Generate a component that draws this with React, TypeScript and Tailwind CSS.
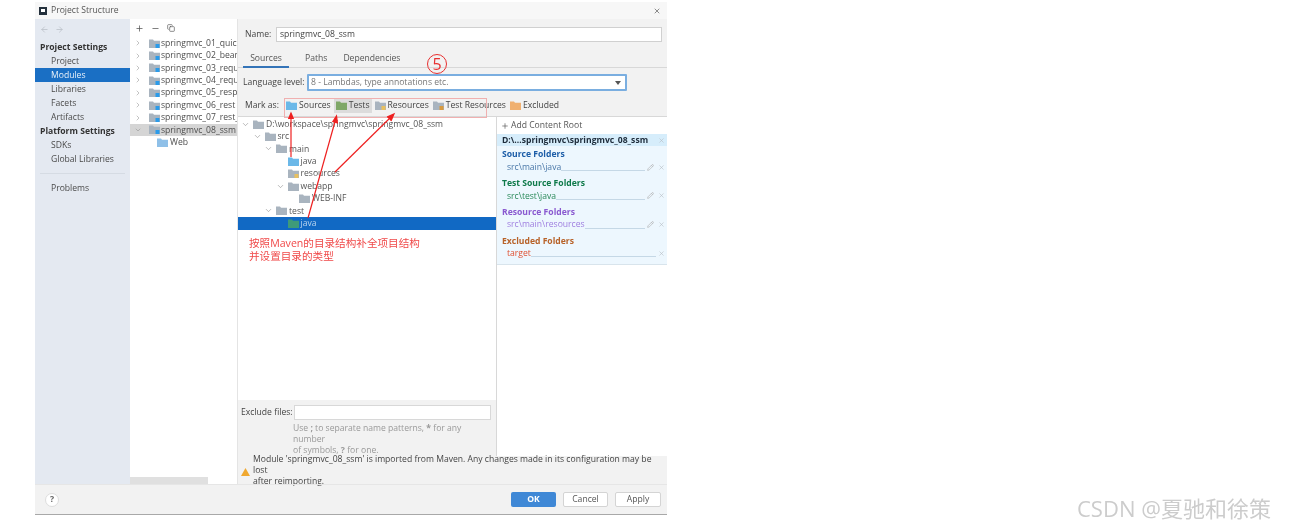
import { ChevronDown, ChevronRight, Plus, Minus, Copy, ArrowLeft, ArrowRight, X, Pencil } from "lucide-react";

const modules = [
  "springmvc_01_quickstart",
  "springmvc_02_bean_load",
  "springmvc_03_request_mapping",
  "springmvc_04_request_param",
  "springmvc_05_response",
  "springmvc_06_rest",
  "springmvc_07_rest_case",
];

const Folder = ({ color = "#a9b4bf", badge }: { color?: string; badge?: string }) => (
  <svg width="11" height="9" viewBox="0 0 11 9" className="shrink-0">
    <path d="M0 0.5h4l1 1.2h6V9H0z" fill={color} />
    {badge && <rect x="6.5" y="5" width="4" height="4" fill={badge} />}
  </svg>
);

const NavItem = ({ label, active }: { label: string; active?: boolean }) => (
  <div className={`h-[14px] pl-[16px] flex items-center ${active ? "bg-[#1a6fc4] text-[#e8f0f8]" : "text-[#4a4a4a]"}`}>{label}</div>
);

const TreeRow = ({ depth, label, open, color, badge, active }: { depth: number; label: string; open?: boolean; color?: string; badge?: string; active?: boolean }) => (
  <div className={`h-[12.4px] flex items-center ${active ? "bg-[#1169c4] text-[#b8d4ee]" : "text-[#555]"}`} style={{ paddingLeft: depth * 11.5 + 3 }}>
    <span className="w-[12px] shrink-0">{open && <ChevronDown size={9} strokeWidth={1.5} className="text-[#888]" />}</span>
    <Folder color={color} badge={badge} />
    <span className="ml-[2px] whitespace-nowrap">{label}</span>
  </div>
);

const FolderGroup = ({ title, path, titleColor, pathColor, edit = true }: { title: string; path: string; titleColor: string; pathColor: string; edit?: boolean }) => (
  <div className="h-[28.8px] pl-[5px] pr-[2px]">
    <div className={`h-[13px] flex items-center font-bold ${titleColor}`}>{title}</div>
    <div className="h-[12px] flex items-center">
      <span className={`pl-[5px] ${pathColor}`}>{path}</span>
      <span className="flex-1 self-end mb-[2px] mr-[2px] border-b border-[#c5d8e6]" />
      {edit && <Pencil size={7} className="text-[#aaa] mr-[4px]" />}
      <X size={7} className="text-[#b5bcc2]" />
    </div>
  </div>
);

export default function App() {
  return (
    <div className="relative w-[1294px] h-[530px] bg-white overflow-hidden pl-[35px] pt-[2px] text-[8.6px] leading-none blur-[0.35px]" style={{ fontFamily: '"Open Sans", "Noto Sans CJK SC", sans-serif' }}>
      <div className="w-[632px] h-[513px] flex flex-col bg-[#f2f2f2] border-b border-[#a8a8a8]">
        {/* Title bar */}
        <div className="h-[17px] shrink-0 bg-[#f7f7f7] flex items-center pl-[4px] pr-[6px] text-[#555]">
          <span className="w-[8px] h-[8px] bg-[#24303c] mr-[4px] flex items-center justify-center">
            <span className="w-[4px] h-[3px] bg-white" />
          </span>
          <span className="flex-1">Project Structure</span>
          <X size={8} className="text-[#555]" />
        </div>

        <div className="flex-1 flex min-h-0">
          {/* Sidebar */}
          <div className="w-[95px] shrink-0 bg-[#e4e9f1]">
            <div className="h-[21px] flex items-center gap-[6px] pl-[5px] text-[#b8bec6]">
              <ArrowLeft size={9} />
              <ArrowRight size={9} />
            </div>
            <div className="h-[14px] pl-[5px] flex items-center font-bold text-[#333]">Project Settings</div>
            <NavItem label="Project" />
            <NavItem label="Modules" active />
            <NavItem label="Libraries" />
            <NavItem label="Facets" />
            <NavItem label="Artifacts" />
            <div className="h-[14px] pl-[5px] flex items-center font-bold text-[#333]">Platform Settings</div>
            <NavItem label="SDKs" />
            <NavItem label="Global Libraries" />
            <div className="mx-[5px] my-[7px] border-t border-[#d5dbe3]" />
            <NavItem label="Problems" />
          </div>

          {/* Module list */}
          <div className="w-[108px] shrink-0 bg-white flex flex-col overflow-hidden border-r border-[#e4e4e4]">
            <div className="h-[16px] mt-[1px] flex items-center gap-[7px] pl-[5px] text-[#555]">
              <Plus size={9} />
              <Minus size={9} />
              <Copy size={8} />
            </div>
            <div className="pt-[1px] flex-1">
              {modules.map((m) => (
                <div key={m} className="h-[12.4px] flex items-center pl-[4px] text-[#4d4d4d]">
                  <ChevronRight size={8} strokeWidth={1.5} className="shrink-0 text-[#888] mr-[7px]" />
                  <Folder badge="#2b9bea" />
                  <span className="ml-[1px] whitespace-nowrap">{m}</span>
                </div>
              ))}
              <div className="h-[12.4px] flex items-center pl-[4px] bg-[#d5d5d5] text-[#4d4d4d]">
                <ChevronDown size={8} strokeWidth={1.5} className="shrink-0 text-[#888] mr-[7px]" />
                <Folder badge="#2b9bea" />
                <span className="ml-[1px] whitespace-nowrap">springmvc_08_ssm</span>
              </div>
              <div className="h-[12.4px] flex items-center pl-[27px] text-[#4d4d4d]">
                <Folder color="#8fc0e8" />
                <span className="ml-[2px]">Web</span>
              </div>
            </div>
            <div className="h-[7px] w-[78px] bg-[#e0e0e0]" />
          </div>

          {/* Right panel */}
          <div className="flex-1 min-w-0 flex flex-col">
            <div className="h-[98px] shrink-0 border-b border-[#d8d8d8]">
              <div className="h-[30px] flex items-center pl-[7px] pr-[5px] pt-[1px] text-[#444]">
                <span className="w-[31px]">Name:</span>
                <div className="flex-1 h-[15px] bg-white border border-[#d0d0d0] flex items-center pl-[3px]">springmvc_08_ssm</div>
              </div>
              <div className="h-[19px] flex items-end gap-[16px] pl-[5px] border-b border-[#d8d8d8] text-[#555]">
                <div className="w-[46px] h-[18px] flex items-center justify-center border-b-2 border-[#3474b8] -mb-px">Sources</div>
                <div className="h-[18px] flex items-center">Paths</div>
                <div className="h-[18px] flex items-center">Dependencies</div>
              </div>
              <div className="h-[21px] mt-[4px] flex items-center pl-[5px] text-[#444]">
                <span className="w-[64px]">Language level:</span>
                <div className="w-[320px] h-[17px] bg-white border-2 border-[#7aaee0] rounded-[1px] flex items-center pl-[2px] pr-[4px] text-[#777]">
                  <span className="flex-1">8 - Lambdas, type annotations etc.</span>
                  <svg width="6" height="4" viewBox="0 0 6 4"><path d="M0 0h6L3 4z" fill="#555" /></svg>
                </div>
              </div>
              <div className="h-[25px] flex items-center pl-[7px] text-[#444]">
                <span className="w-[41px]">Mark as:</span>
                <span className="flex items-center gap-[2px] pr-[3px]"><Folder color="#6bb8e8" />Sources</span>
                <span className="flex items-center gap-[2px] h-[14px] px-[2px] bg-[#dcdcdc] mr-[3px]"><Folder color="#7fa868" />Tests</span>
                <span className="flex items-center gap-[2px] mr-[4px]"><Folder badge="#e8c060" />Resources</span>
                <span className="flex items-center gap-[2px] mr-[4px]"><Folder badge="#d89a40" />Test Resources</span>
                <span className="flex items-center gap-[2px]"><Folder color="#f0b070" />Excluded</span>
              </div>
            </div>

            <div className="flex-1 min-h-0 flex">
              <div className="w-[259px] shrink-0 flex flex-col border-r border-[#d8d8d8]">
                <div className="h-[293px] bg-white pt-[1px]">
                  <TreeRow depth={0} open label="D:\workspace\springmvc\springmvc_08_ssm" />
                  <TreeRow depth={1} open label="src" />
                  <TreeRow depth={2} open label="main" />
                  <TreeRow depth={3} color="#6bb8e8" label="java" />
                  <TreeRow depth={3} badge="#e8c060" label="resources" />
                  <TreeRow depth={3} open label="webapp" />
                  <TreeRow depth={4} label="WEB-INF" />
                  <TreeRow depth={2} open label="test" />
                  <TreeRow depth={3} color="#3e9a7a" label="java" active />
                </div>
                <div className="flex-1 pl-[3px] pr-[5px] pt-[5px] text-[#444]">
                  <div className="flex items-center">
                    <span className="w-[53px]">Exclude files:</span>
                    <div className="flex-1 h-[15px] bg-white border border-[#d8d8d8]" />
                  </div>
                  <p className="pl-[52px] mt-[3px] leading-[11px] text-[#999]">
                    Use <b>;</b> to separate name patterns, <b>*</b> for any number<br />of symbols, <b>?</b> for one.
                  </p>
                </div>
              </div>

              {/* Content root */}
              <div className="flex-1 min-w-0 bg-white">
                <div className="bg-[#edf7fe] border-b border-[#d8e4ec] h-[148px]">
                  <div className="h-[17px] bg-white flex items-center pl-[4px] gap-[2px] text-[#555]">
                    <Plus size={8} />Add Content Root
                  </div>
                  <div className="h-[12px] bg-[#d6edfb] flex items-center pl-[5px] pr-[2px] font-bold text-[#1d2b3a]">
                    <span className="flex-1">D:\...springmvc\springmvc_08_ssm</span>
                    <X size={7} className="text-[#b5bcc2]" />
                  </div>
                  <div className="h-[2px]" />
                  <FolderGroup title="Source Folders" path="src\main\java" titleColor="text-[#1d5ea8]" pathColor="text-[#4a78a8]" />
                  <FolderGroup title="Test Source Folders" path="src\test\java" titleColor="text-[#0f7a4a]" pathColor="text-[#2a8a5a]" />
                  <FolderGroup title="Resource Folders" path="src\main\resources" titleColor="text-[#8a5ad0]" pathColor="text-[#a080e0]" />
                  <FolderGroup title="Excluded Folders" path="target" titleColor="text-[#b8632a]" pathColor="text-[#e05030]" edit={false} />
                </div>
              </div>
            </div>

            <div className="h-[28px] shrink-0 flex items-center gap-[3px] pl-[3px] text-[#444] leading-[11px]">
              <svg width="9" height="8" viewBox="0 0 9 8" className="shrink-0 mt-[3px]"><path d="M4.5 0L9 8H0z" fill="#f0a830" /></svg>
              <span>Module 'springmvc_08_ssm' is imported from Maven. Any changes made in its configuration may be lost<br />after reimporting.</span>
            </div>
          </div>
        </div>

        {/* Footer */}
        <div className="h-[30px] shrink-0 flex items-center pl-[10px] pr-[6px] border-t border-[#e6e6e6]">
          <div className="w-[14px] h-[14px] rounded-full bg-white border border-[#ddd] flex items-center justify-center font-bold text-[#666]">?</div>
          <div className="flex-1" />
          <div className="flex gap-[7px] text-[#555]">
            <div className="w-[45px] h-[15px] rounded-[2px] bg-[#3f88d6] text-white font-bold flex items-center justify-center">OK</div>
            <div className="w-[45px] h-[15px] rounded-[2px] bg-white border border-[#d4d4d4] flex items-center justify-center">Cancel</div>
            <div className="w-[46px] h-[15px] rounded-[2px] bg-white border border-[#d4d4d4] flex items-center justify-center">Apply</div>
          </div>
        </div>
      </div>

      {/* Annotations over the screenshot */}
      <div className="absolute left-[284px] top-[98px] w-[203px] h-[20px] border border-[#f0b0b0]" />
      <div className="absolute left-[427px] top-[54px] w-[20px] h-[20px] rounded-full border border-[#e83030] flex items-center justify-center text-[16px] text-[#e83030]">5</div>
      <svg className="absolute left-0 top-0" width="1294" height="530" viewBox="0 0 1294 530" fill="none">
        <g stroke="#ee2020" strokeWidth="1.2">
          <path d="M291 157V114" />
          <path d="M288.5 119L291 113L293.5 119" fill="#ee2020" />
          <path d="M308 218L336 118" />
          <path d="M332.5 122L336.5 116L337.5 123.5" fill="#ee2020" />
          <path d="M335 172L393 115" />
          <path d="M387 117L394 114L391 121" fill="#ee2020" />
        </g>
      </svg>
      <div className="absolute left-[249px] top-[237px] text-[10.6px] leading-[13px] text-[#f04848]">
        按照Maven的目录结构补全项目结构<br />并设置目录的类型
      </div>
      <div className="absolute left-[1077px] top-[495px] text-[22px] leading-[26px] text-[#cccccc] whitespace-nowrap">CSDN @夏驰和徐策</div>
    </div>
  );
}
